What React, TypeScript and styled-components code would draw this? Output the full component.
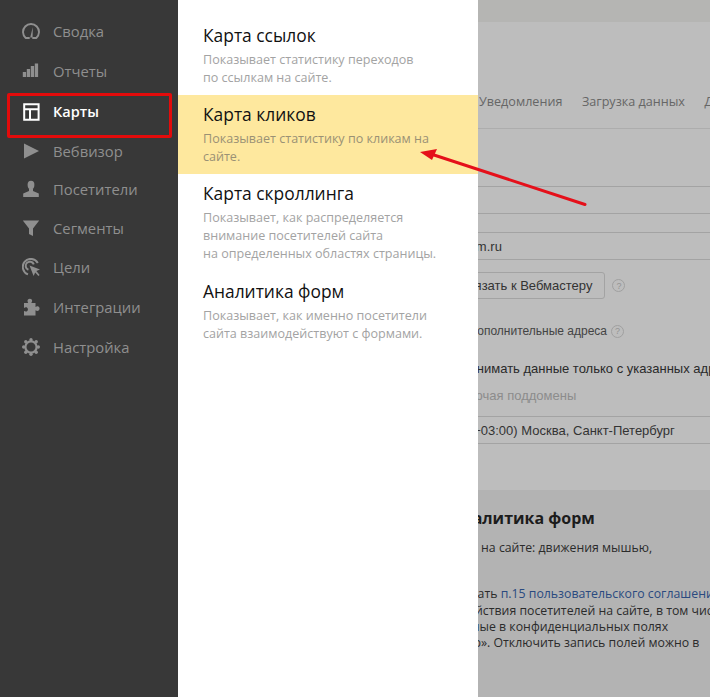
import React from "react";
import styled, { createGlobalStyle } from "styled-components";

const Global = createGlobalStyle`
  html, body { margin: 0; padding: 0; }
  body { background: #bdbdbd; }
`;

const Page = styled.div`
  position: relative;
  display: flex;
  width: 710px;
  height: 697px;
  overflow: hidden;
  font-family: "Open Sans", sans-serif;
`;

const Sidebar = styled.nav`
  flex: 0 0 178px;
  background: #383838;
  padding-top: 11px;
  box-sizing: border-box;
`;

const NavItem = styled.div<{ $h: number; $active?: boolean }>`
  display: flex;
  align-items: center;
  height: ${(p) => p.$h}px;
  padding-left: 22px;
  gap: 13px;
  font-size: ${(p) => (p.$active ? 14.5 : 14.8)}px;
  font-weight: ${(p) => (p.$active ? 600 : 400)};
  color: ${(p) => (p.$active ? "#fff" : "#8f8f8f")};
`;

const NavIcon = styled.svg`
  flex: 0 0 18px;
  width: 18px;
  height: 18px;
  fill: currentColor;
`;

const Panel = styled.div`
  flex: 0 0 300px;
  background: #fff;
  padding-top: 16px;
  box-sizing: border-box;
`;

const MenuItem = styled.div<{ $active?: boolean; $bottom: number }>`
  padding: 8px 25px ${(p) => p.$bottom}px 25px;
  background: ${(p) => (p.$active ? "#fee89e" : "transparent")};
`;

const MenuTitle = styled.div`
  font-size: 17.4px;
  line-height: 22px;
  color: #111;
`;

const MenuDesc = styled.div<{ $active?: boolean }>`
  margin-top: 5px;
  font-size: 12.55px;
  line-height: 18px;
  white-space: pre-line;
  color: ${(p) => (p.$active ? "#9a9175" : "#a3a3a3")};
`;

const Content = styled.main`
  flex: 1;
  min-width: 0;
  overflow: hidden;
  background: #bdbdbd;
`;

const Sheet = styled.div`
  width: 760px;
  margin-left: -300px;
  font-family: "Liberation Sans", sans-serif;
  font-size: 13px;
  color: #333;
`;

const TopBand = styled.div`
  height: 22px;
  background: #b5b5b3;
`;

const Tabs = styled.div`
  display: flex;
  align-items: flex-end;
  gap: 19.5px;
  height: 88px;
  padding: 0 0 18px 301px;
  font-family: "Open Sans", sans-serif;
  font-size: 12.6px;
  line-height: 16px;
  color: #666;
  white-space: nowrap;
  border-bottom: 1px solid #adadad;
`;

const Tab = styled.span``;

const Field = styled.div<{ $h: number; $off: number }>`
  display: flex;
  align-items: center;
  height: ${(p) => p.$h}px;
  padding-left: ${(p) => 300 - p.$off}px;
  border-bottom: 1px solid #a3a3a3;
  white-space: nowrap;
`;

const Spacer = styled.div<{ $h: number }>`
  height: ${(p) => p.$h}px;
`;

const Row = styled.div<{ $h: number; $off: number; $size?: number; $muted?: boolean; $dark?: boolean }>`
  display: flex;
  align-items: center;
  height: ${(p) => p.$h}px;
  padding-left: ${(p) => 300 - p.$off}px;
  font-size: ${(p) => p.$size ?? 13}px;
  white-space: nowrap;
  color: ${(p) => (p.$muted ? "#8c8c8c" : p.$dark ? "#2a2a2a" : "#444")};
`;

const Button = styled.div`
  display: flex;
  align-items: center;
  height: 25px;
  padding: 0 12px 0 24px;
  border: 1px solid #a3a3a3;
  border-radius: 3px;
  color: #333;
`;

const Help = styled.span<{ $gap: number }>`
  display: inline-flex;
  align-items: center;
  justify-content: center;
  width: 11px;
  height: 11px;
  margin-left: ${(p) => p.$gap}px;
  border: 1px solid #a0a0a0;
  border-radius: 50%;
  font-size: 9px;
  color: #939393;
`;

const Lower = styled.section`
  background: #b3b3b3;
  height: 207px;
  padding-top: 16px;
  box-sizing: border-box;
  font-family: "Open Sans", sans-serif;
  font-size: 12.3px;
  line-height: 16.33px;
  color: #2b2b2b;
`;

const LowerTitle = styled.div<{ $off: number }>`
  padding-left: ${(p) => 300 - p.$off}px;
  font-size: 16px;
  line-height: 24px;
  font-weight: 700;
  color: #1c1c1c;
  white-space: nowrap;
`;

const LowerLine = styled.div<{ $off: number; $top?: number }>`
  padding-left: ${(p) => 300 - p.$off}px;
  margin-top: ${(p) => p.$top ?? 0}px;
  white-space: nowrap;
`;

const Link = styled.span`
  color: #2a4a80;
`;

const Highlight = styled.div`
  position: absolute;
  left: 7px;
  top: 93px;
  width: 165px;
  height: 45px;
  box-sizing: border-box;
  border: 3px solid #e30b0b;
  border-radius: 2px;
`;

const Arrow = styled.svg`
  position: absolute;
  left: 410px;
  top: 140px;
  width: 190px;
  height: 80px;
`;

const gearDots = [
  [16.3, 9], [14.2, 14.2], [9, 16.3], [3.8, 14.2],
  [1.7, 9], [3.8, 3.8], [9, 1.7], [14.2, 3.8],
];

const icons: Record<string, React.ReactNode> = {
  gauge: (
    <>
      <path d="M3.7 16A8 8 0 1 1 14.3 16M3.7 16H7M11 16H14.3" fill="none" stroke="currentColor" strokeWidth="1.9" strokeLinecap="round" />
      <path d="M8.2 15.5L10.8 5 10.6 15.5z" />
    </>
  ),
  bars: (
    <>
      <rect x="0.8" y="10" width="3.3" height="5" />
      <rect x="4.8" y="7" width="3.3" height="8" />
      <rect x="8.8" y="4" width="3.3" height="11" />
      <rect x="12.8" y="1.5" width="3.3" height="13.5" />
    </>
  ),
  map: (
    <path
      d="M2.2 1.2H16.6V16.8H2.2zM2.2 6.2H16.6M8 6.2V16.8"
      fill="none"
      stroke="currentColor"
      strokeWidth="2"
    />
  ),
  play: <path d="M2 1.5L17 9 2 16.5z" />,
  user: (
    <>
      <ellipse cx="9" cy="5" rx="3.4" ry="4.2" />
      <path d="M7 8.5h4v2.6l5.8 2.4v3.5H1.2v-3.5L7 11.1z" />
    </>
  ),
  funnel: <path d="M0.8 1.5h16.4L11 9.5v7.5l-4-2V9.5z" />,
  target: (
    <>
      <path d="M15.8 5A8 8 0 1 0 6 16.4" fill="none" stroke="currentColor" strokeWidth="2" />
      <path d="M11.8 6.4A4.2 4.2 0 1 0 6.4 11.8" fill="none" stroke="currentColor" strokeWidth="2" />
      <path d="M7.5 7.5L18 11.5l-3.6 1.6L17.6 17l-1.2 1-3.2-3.6L11.6 18z" />
    </>
  ),
  puzzle: (
    <path d="M2 5h4.2C5.5 3.6 5.2 2.6 6 1.5c.9-1.1 2.9-1 3.7 0 .8 1 .4 2.2-.4 3.5h4.2v4c1.2-.7 2.2-.9 3.2-.2 1.2.9 1.2 2.8 0 3.7-1 .7-2 .4-3.2-.2v5.2H2v-4.4c1.2.6 2.4.8 3.3-.1.9-1 .8-2.4-.1-3.2-.9-.8-2-.5-3.2.1z" />
  ),
  gear: (
    <>
      <circle cx="9" cy="9" r="5.6" fill="none" stroke="currentColor" strokeWidth="2.2" />
      {gearDots.map(([cx, cy]) => (
        <circle key={`${cx}-${cy}`} cx={cx} cy={cy} r="1.7" />
      ))}
    </>
  ),
};

const nav = [
  { label: "Сводка", icon: "gauge", h: 40 },
  { label: "Отчеты", icon: "bars", h: 40 },
  { label: "Карты", icon: "map", h: 41 },
  { label: "Вебвизор", icon: "play", h: 38 },
  { label: "Посетители", icon: "user", h: 38 },
  { label: "Сегменты", icon: "funnel", h: 39 },
  { label: "Цели", icon: "target", h: 40 },
  { label: "Интеграции", icon: "puzzle", h: 40 },
  { label: "Настройка", icon: "gear", h: 40 },
];

const menu = [
  { title: "Карта ссылок", desc: "Показывает статистику переходов\nпо ссылкам на сайте.", bottom: 8 },
  { title: "Карта кликов", desc: "Показывает статистику по кликам на\nсайте.", bottom: 8, active: true },
  { title: "Карта скроллинга", desc: "Показывает, как распределяется\nвнимание посетителей сайта\nна определенных областях страницы.", bottom: 9 },
  { title: "Аналитика форм", desc: "Показывает, как именно посетители\nсайта взаимодействуют с формами.", bottom: 8 },
];

export default function App() {
  return (
    <>
      <Global />
      <Page>
        <Sidebar>
          {nav.map((n) => (
            <NavItem key={n.label} $h={n.h} $active={n.label === "Карты"}>
              <NavIcon viewBox="0 0 18 18">{icons[n.icon]}</NavIcon>
              {n.label}
            </NavItem>
          ))}
        </Sidebar>
        <Panel>
          {menu.map((m) => (
            <MenuItem key={m.title} $active={m.active} $bottom={m.bottom}>
              <MenuTitle>{m.title}</MenuTitle>
              <MenuDesc $active={m.active}>{m.desc}</MenuDesc>
            </MenuItem>
          ))}
        </Panel>
        <Content>
          <Sheet>
            <TopBand />
            <Tabs>
              <Tab>Уведомления</Tab>
              <Tab>Загрузка данных</Tab>
              <Tab>Доступ</Tab>
            </Tabs>
            <Field $h={57} $off={0} />
            <Field $h={26} $off={0} />
            <Field $h={18} $off={0} />
            <Field $h={26} $off={78}>example-forum.ru</Field>
            <Spacer $h={12} />
            <Row $h={27} $off={59}>
              <Button>Привязать к Вебмастеру</Button>
              <Help $gap={7}>?</Help>
            </Row>
            <Spacer $h={18} />
            <Row $h={28} $size={12} $off={9}>Дополнительные адреса<Help $gap={4}>?</Help></Row>
            <Spacer $h={9} />
            <Row $h={28} $dark $off={25}>Принимать данные только с указанных адресов</Row>
            <Row $h={27} $muted $off={27}>Включая поддомены</Row>
            <Field $h={7} $off={0} />
            <Field $h={26} $off={38}>(GMT+03:00) Москва, Санкт-Петербург</Field>
            <Spacer $h={46} />
            <Lower>
              <LowerTitle $off={27}>Аналитика форм</LowerTitle>
              <LowerLine $off={76} $top={10}>посетителей на сайте: движения мышью,</LowerLine>
              <LowerLine $off={48} $top={30}>принимать <Link>п.15 пользовательского соглашения</Link></LowerLine>
              <LowerLine $off={61}>взаимодействия посетителей на сайте, в том числе</LowerLine>
              <LowerLine $off={49}>введенные в конфиденциальных полях</LowerLine>
              <LowerLine $off={61}>«Вебвизор». Отключить запись полей можно в</LowerLine>
            </Lower>
          </Sheet>
        </Content>
        <Highlight />
        <Arrow viewBox="0 0 190 80">
          <path d="M175 64.5L24 15" stroke="#e5101a" strokeWidth="3" strokeLinecap="round" fill="none" />
          <path d="M10 12L27 9 22 20z" fill="#e5101a" />
        </Arrow>
      </Page>
    </>
  );
}
